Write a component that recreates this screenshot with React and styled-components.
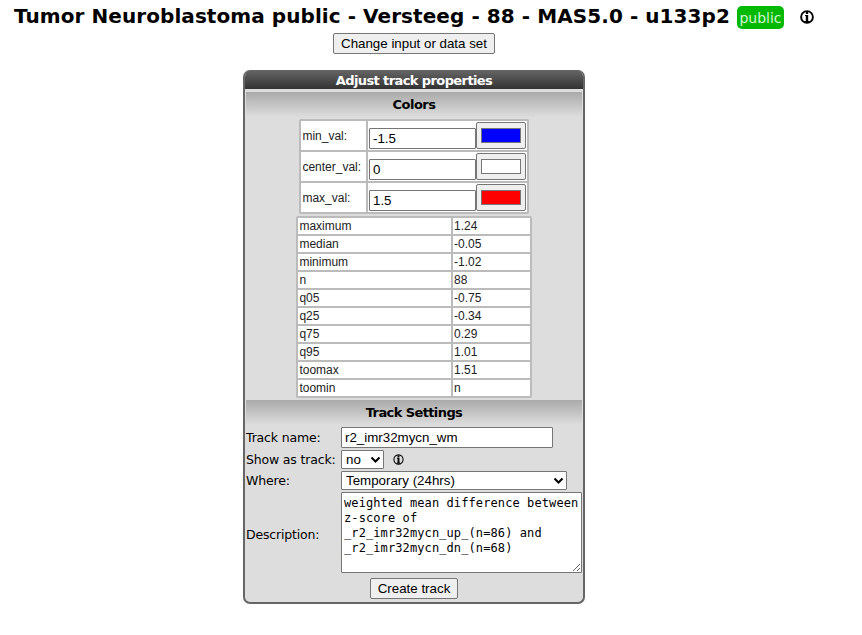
import React from "react";
import styled, { createGlobalStyle } from "styled-components";

const GlobalStyle = createGlobalStyle`
  *, *::before, *::after { box-sizing: border-box; }
  body { margin: 0; background: #fff; color: #000; font: 13px/16px "DejaVu Sans", Verdana, sans-serif; }
  input, select, button, textarea { margin: 0; color: #000; font: 13.33px "Liberation Sans", Arial, sans-serif; }
`;

const Page = styled.main`
  display: flex;
  flex-direction: column;
  width: 862px;
  height: 635px;
`;

const TitleBar = styled.header`
  display: flex;
  height: 33px;
  padding-left: 14px;
`;

const Title = styled.h1`
  flex: none;
  width: 723px;
  margin: 0;
  font-size: 20px;
  line-height: 24px;
  padding-top: 4px;
  white-space: nowrap;
  letter-spacing: 0.07px;
`;

const Badge = styled.span`
  width: 47px;
  height: 23px;
  margin-top: 6px;
  border-radius: 5px;
  background: #00b900;
  color: #d4f4d4;
  font-size: 14px;
  line-height: 24px;
  text-align: center;
  white-space: nowrap;
`;

const TitleInfo = styled.span`
  display: flex;
  margin: 10px 0 0 16px;
`;

const Button = styled.button`
  align-self: center;
  width: ${(p) => p.$width}px;
  height: 21px;
  padding: 0;
  border: 1px solid #767676;
  border-radius: 2px;
  background: #efefef;
  line-height: 19px;
  white-space: nowrap;
`;

const TopAction = styled.div`
  display: flex;
  padding-left: 333px;
`;

const Panel = styled.section`
  display: flex;
  flex-direction: column;
  width: 342px;
  height: 534px;
  margin: 16px 0 0 243px;
  border: 2px solid #666;
  border-top: 0;
  border-radius: 7px;
  background: #ddd;
  overflow: hidden;
`;

const PanelTitle = styled.h2`
  height: 19px;
  margin: 0 0 3px;
  background: linear-gradient(#666, #333);
  color: #fff;
  font-size: 13px;
  line-height: 21px;
  text-align: center;
  letter-spacing: -0.6px;
`;

const SectionTitle = styled.h3`
  height: 25px;
  margin: 0 1px;
  background: linear-gradient(#aaa, #ddd);
  font-size: 13px;
  line-height: 25px;
  text-align: center;
  letter-spacing: ${(p) => p.$spacing}px;
`;

const ColorGrid = styled.div`
  display: grid;
  grid-template-columns: 65px 159px;
  grid-auto-rows: 29px;
  gap: 2px;
  width: 230px;
  margin: 2px 0 0 54px;
  padding: 2px;
  border-radius: 2px;
  background: #bbb;
`;

const Cell = styled.div`
  display: flex;
  align-items: center;
  padding-left: 1.4px;
  background: #fff;
  color: #222;
  font: 12px/16px "Liberation Sans", Arial, sans-serif;
  white-space: nowrap;
`;

const ValueCell = styled(Cell)`
  padding-left: 1px;
`;

const ColorCell = styled(Cell)`
  align-items: flex-end;
  padding: 0 0 1px 1px;
`;

const TextInput = styled.input`
  width: ${(p) => p.$width}px;
  height: 21px;
  padding: 1px 3px;
  border: 1px solid #767676;
  border-radius: 1px;
  background: #fff;
`;

const ColorButton = styled.button`
  display: flex;
  justify-content: center;
  width: 50px;
  height: 27px;
  padding: 5px 0 0;
  border: 1px solid #767676;
  border-radius: 2px;
  background: #efefef;
`;

const Swatch = styled.span`
  width: 40px;
  height: 15px;
  border: 1px solid #777;
  background: ${(p) => p.$color};
`;

const StatsGrid = styled.div`
  display: grid;
  grid-template-columns: 153px 77px;
  grid-auto-rows: 16px;
  gap: 2px;
  width: 236px;
  margin: 2px 0 2px 51px;
  padding: 2px;
  border-radius: 2px;
  background: #bbb;
`;

const Field = styled.div`
  display: flex;
  align-items: center;
  height: ${(p) => p.$height}px;
  margin: ${(p) => p.$gap}px 0 0 1px;
`;

const Label = styled.label`
  flex: none;
  width: 95px;
  padding-top: ${(p) => p.$drop || 0}px;
  font-size: 12.5px;
  white-space: nowrap;
  letter-spacing: -0.17px;
`;

const SelectBox = styled.div`
  display: grid;
  align-items: center;
  width: ${(p) => p.$width}px;
  height: 19px;

  > * { grid-area: 1 / 1; }
  > svg { justify-self: end; margin-right: 3px; pointer-events: none; }
`;

const Select = styled.select`
  appearance: none;
  width: 100%;
  height: 19px;
  padding: 0 4px;
  border: 1px solid #767676;
  border-radius: 1px;
  background: #fff;
`;

const FieldInfo = styled.span`
  display: flex;
  margin-left: 9px;
`;

const Description = styled.textarea`
  width: 241px;
  height: 81px;
  padding: 3px 2px;
  border: 1px solid #767676;
  border-radius: 1px;
  background: #fff;
  font: 12px/15px "DejaVu Sans Mono", monospace;
  letter-spacing: 0.1px;
  overflow: hidden;
  resize: both;
`;

const Footer = styled.div`
  display: flex;
  justify-content: center;
  padding-top: 5px;
`;

function InfoIcon({ size, weight }) {
  return (
    <svg width={size} height={size} viewBox="0 0 14 14" aria-label="info">
      <circle cx="7" cy="7" r="5.9" fill="none" stroke="#000" strokeWidth={weight} />
      <path d="M5.8 1.9h2.4v2.2H5.8zM5 4.9h3.2v6h.9v1.4H4.9v-1.4h.9V6.1H5z" fill="#000" />
    </svg>
  );
}

function Chevron() {
  return (
    <svg width="11" height="9" viewBox="0 0 11 9" fill="none" stroke="#000" strokeWidth="2">
      <path d="M1.5 2.5l4 4 4-4" />
    </svg>
  );
}

const colors = [
  ["min_val:", "-1.5", "#00f"],
  ["center_val:", "0", "#fff"],
  ["max_val:", "1.5", "#f00"],
];

const stats = [
  ["maximum", "1.24"],
  ["median", "-0.05"],
  ["minimum", "-1.02"],
  ["n", "88"],
  ["q05", "-0.75"],
  ["q25", "-0.34"],
  ["q75", "0.29"],
  ["q95", "1.01"],
  ["toomax", "1.51"],
  ["toomin", "n"],
];

const description =
  "weighted mean difference between\nz-score of\n_r2_imr32mycn_up_(n=86) and\n_r2_imr32mycn_dn_(n=68)";

export default function App() {
  return (
    <Page>
      <GlobalStyle />
      <TitleBar>
        <Title>Tumor Neuroblastoma public - Versteeg - 88 - MAS5.0 - u133p2</Title>
        <Badge>public</Badge>
        <TitleInfo><InfoIcon size={14} weight={1.9} /></TitleInfo>
      </TitleBar>
      <TopAction><Button $width={162}>Change input or data set</Button></TopAction>
      <Panel>
        <PanelTitle>Adjust track properties</PanelTitle>
        <SectionTitle $spacing={-0.5}>Colors</SectionTitle>
        <ColorGrid>
          {colors.map(([name, value, color]) => (
            <React.Fragment key={name}>
              <Cell>{name}</Cell>
              <ColorCell>
                <TextInput $width={107} defaultValue={value} />
                <ColorButton aria-label={name}><Swatch $color={color} /></ColorButton>
              </ColorCell>
            </React.Fragment>
          ))}
        </ColorGrid>
        <StatsGrid>
          {stats.map(([name, value]) => (
            <React.Fragment key={name}>
              <Cell>{name}</Cell>
              <ValueCell>{value}</ValueCell>
            </React.Fragment>
          ))}
        </StatsGrid>
        <SectionTitle $spacing={-0.6}>Track Settings</SectionTitle>
        <Field $height={21} $gap={2}>
          <Label>Track name:</Label>
          <TextInput $width={212} defaultValue="r2_imr32mycn_wm" />
        </Field>
        <Field $height={19} $gap={2}>
          <Label>Show as track:</Label>
          <SelectBox $width={43}>
            <Select><option>no</option></Select>
            <Chevron />
          </SelectBox>
          <FieldInfo><InfoIcon size={11} weight={1.3} /></FieldInfo>
        </Field>
        <Field $height={19} $gap={2}>
          <Label>Where:</Label>
          <SelectBox $width={226}>
            <Select><option>Temporary (24hrs)</option></Select>
            <Chevron />
          </SelectBox>
        </Field>
        <Field $height={81} $gap={2}>
          <Label $drop={4}>Description:</Label>
          <Description defaultValue={description} spellCheck={false} />
        </Field>
        <Footer><Button $width={88}>Create track</Button></Footer>
      </Panel>
    </Page>
  );
}
